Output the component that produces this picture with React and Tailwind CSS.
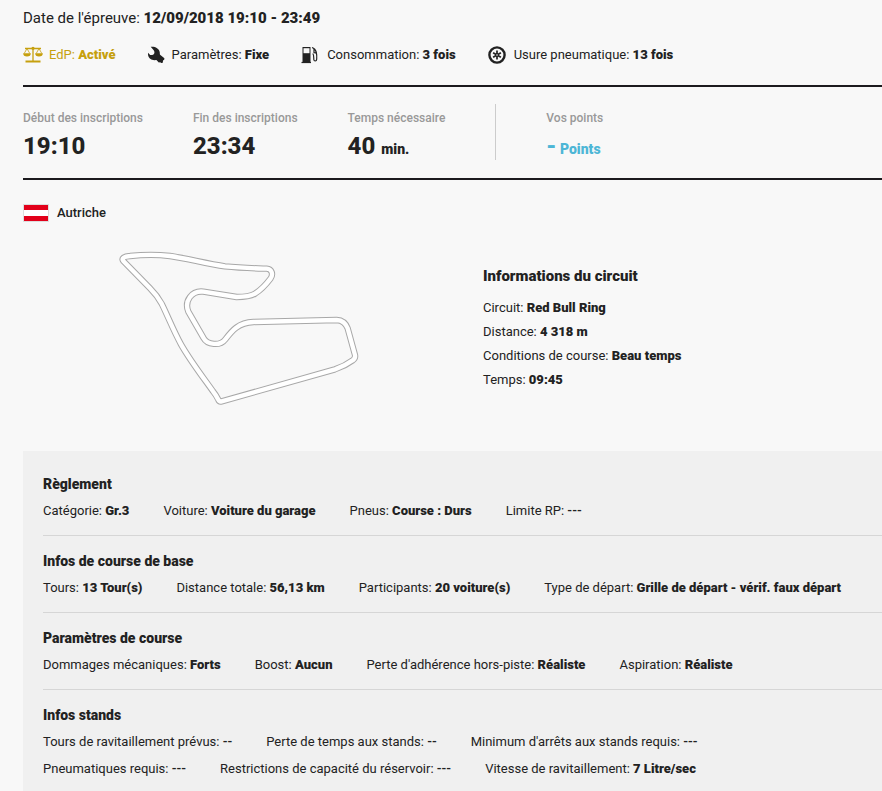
import React from 'react';

const sections = [
  {
    title: 'Règlement',
    items: [
      ['Catégorie', 'Gr.3'],
      ['Voiture', 'Voiture du garage'],
      ['Pneus', 'Course : Durs'],
      ['Limite RP', '---'],
    ],
  },
  {
    title: 'Infos de course de base',
    items: [
      ['Tours', '13 Tour(s)'],
      ['Distance totale', '56,13 km'],
      ['Participants', '20 voiture(s)'],
      ['Type de départ', 'Grille de départ - vérif. faux départ'],
    ],
  },
  {
    title: 'Paramètres de course',
    items: [
      ['Dommages mécaniques', 'Forts'],
      ['Boost', 'Aucun'],
      ["Perte d'adhérence hors-piste", 'Réaliste'],
      ['Aspiration', 'Réaliste'],
    ],
  },
  {
    title: 'Infos stands',
    items: [
      ['Tours de ravitaillement prévus', '--'],
      ['Perte de temps aux stands', '--'],
      ["Minimum d'arrêts aux stands requis", '---'],
      ['Pneumatiques requis', '---'],
      ['Restrictions de capacité du réservoir', '---'],
      ['Vitesse de ravitaillement', '7 Litre/sec'],
    ],
  },
];

const circuit = [
  ['Circuit', 'Red Bull Ring'],
  ['Distance', '4 318 m'],
  ['Conditions de course', 'Beau temps'],
  ['Temps', '09:45'],
];

const ScaleIcon = () => (
  <svg width="20" height="18" viewBox="1 0 20 18" fill="none" stroke="currentColor" aria-hidden="true">
    <path d="M3 2.500h16M11 1v14" strokeWidth="1.300" />
    <path d="M3.500 15.500h15" strokeWidth="2" />
    <path d="M5 2.500 2.200 7.500M5 2.500l2.800 5M17 2.500l-2.800 5M17 2.500l2.800 5" strokeWidth="0.800" />
    <path d="M1.200 7.200h7.600a3.800 3.200 0 0 1-7.600 0zM13.200 7.200h7.600a3.800 3.200 0 0 1-7.600 0z" fill="currentColor" stroke="none" />
    <circle cx="11" cy="2.300" r="1.600" fill="currentColor" stroke="none" />
  </svg>
);

const WrenchIcon = () => (
  <svg width="18" height="18" viewBox="1 0 18 18" fill="currentColor" aria-hidden="true">
    <path d="M3.700.8C8 .3 12 2.300 12.700 6c.2 1.200 0 2 .4 2.700l4.300 3.600-.2 1.500-1.200.7-.2 2.200-1.600.3-1-.7-1.400.1-2.400-2.300c-1.400.1-3.400.2-5.100-.7C1.500 12 .8 9.700 1 6.800l2.200 2.100c1.500.5 3.300 0 4-1.500.5-1.200.1-2.400-.5-3.200z" />
  </svg>
);

const FuelIcon = () => (
  <svg width="18" height="18" viewBox="0 0 18 18" fill="none" stroke="currentColor" aria-hidden="true">
    <path d="M1.500 1h8v16h-8z" fill="currentColor" stroke="none" />
    <path d="M2.500 2.200H8.500v5h-6z" fill="#f8f8f8" stroke="none" />
    <path d="M.5 16.500h9.500" strokeWidth="1.200" />
    <path d="M11 1.500c2 .5 3.600 2 4.200 4.500.5 2 .7 5 .5 7.300-.2 2.200-2.700 2.200-2.900.2-.1-2.500.2-4.500-1-6M13 3v3.500l2.400.7" strokeWidth="1.200" />
  </svg>
);

const TyreIcon = () => (
  <svg width="18" height="18" viewBox="0 0 18 18" fill="none" stroke="currentColor" aria-hidden="true">
    <circle cx="9" cy="9" r="7.600" strokeWidth="2.400" />
    <path d="M9 4.500v9M5.100 6.800l7.800 4.500M5.100 11.300l7.800-4.500" strokeWidth="1.700" />
    <circle cx="9" cy="9" r="1.700" fill="currentColor" stroke="none" />
    <circle cx="9" cy="9" r=".8" fill="#f8f8f8" stroke="none" />
  </svg>
);

const trackPath =
  'M40 60C34 52 42 46 60 45C100 41 145 41 180 45C225 51 290 68 345 76C395 81 440 82 470 83C486 84 490 100 482 112C470 128 455 145 435 158C418 168 400 168 380 168L280 152C245 148 222 180 235 212L280 290C292 312 330 316 346 295C366 269 385 245 430 243L680 237C698 238 708 248 713 262L735 342Q737 352 728 358Q705 375 675 385L335 481Q328 483 325 476Q318 462 309 451C280 410 240 358 213 310C190 268 172 222 155 188C145 170 133 155 120 142Z';

const TrackMap = () => (
  <svg className="block" width="260" height="170" viewBox="0 0 780 510" fill="none" strokeLinejoin="round" role="img" aria-label="Red Bull Ring">
    <path d={trackPath} stroke="#a8a8a8" strokeWidth="19" />
    <path d={trackPath} stroke="#ffffff" strokeWidth="13" />
  </svg>
);

// Values that are not set are shown as dashes, in a lighter weight
const Entry = ({ label, value }) => (
  <span className="whitespace-nowrap">
    {label}: <strong className={value.startsWith('--') ? 'font-semibold' : 'font-black'}>{value}</strong>
  </span>
);

const Stat = ({ label, children }) => (
  <div className="pt-1">
    <div className="text-xs leading-5 font-medium text-[#999999]">{label}</div>
    <div className="mt-1 h-7 text-2xl leading-7 font-extrabold">{children}</div>
  </div>
);

const App = () => {
  return (
    <main className="min-h-screen bg-[#f8f8f8] pl-[23px] font-['Roboto',sans-serif] text-[13px] leading-6 text-[#222222]">
      {/* Event date and settings */}
      <header className="border-b-2 border-[#1c1a1e] pt-2 pb-[18px]">
        <p className="text-[15px] leading-5">
          Date de l'épreuve: <strong className="font-black">12/09/2018 19:10 - 23:49</strong>
        </p>
        <div className="mt-[15px] flex flex-wrap gap-x-8">
          <div className="flex items-center gap-[6px] text-[#c6a00e]">
            <ScaleIcon />
            <Entry label="EdP" value="Activé" />
          </div>
          <div className="flex items-center gap-[6px]">
            <WrenchIcon />
            <Entry label="Paramètres" value="Fixe" />
          </div>
          <div className="flex items-center gap-2">
            <FuelIcon />
            <Entry label="Consommation" value="3 fois" />
          </div>
          <div className="flex items-center gap-2">
            <TyreIcon />
            <Entry label="Usure pneumatique" value="13 fois" />
          </div>
        </div>
      </header>

      {/* Entry times */}
      <div className="flex gap-[50px] border-b-2 border-[#1c1a1e] pt-[17px] pb-[18px]">
        <Stat label="Début des inscriptions">19:10</Stat>
        <Stat label="Fin des inscriptions">23:34</Stat>
        <Stat label="Temps nécessaire">
          40 <span className="text-sm font-black">min.</span>
        </Stat>
        <div className="w-px bg-[#cccccc]" />
        <Stat label="Vos points">
          <span className="text-[#4db6d6]">
            -<span className="text-sm font-black"> Points</span>
          </span>
        </Stat>
      </div>

      {/* Circuit */}
      <div className="flex items-center gap-2 pt-[21px]">
        <svg width="26" height="18" viewBox="0 0 26 18" aria-hidden="true">
          <path d="M0 0h26v18H0z" fill="#dddddd" />
          <path d="M1 1h24v16H1z" fill="#ffffff" />
          <path d="M1 1h24v5H1zM1 12h24v5H1z" fill="#e2001a" />
        </svg>
        <span className="font-medium">Autriche</span>
      </div>
      <div className="grid grid-cols-[434px_1fr] gap-x-[26px] pt-4 pb-10">
        <div className="flex justify-center">
          <TrackMap />
        </div>
        <div className="pt-[23px]">
          <h2 className="pb-2 text-[15px] leading-6 font-black">Informations du circuit</h2>
          {circuit.map(([label, value]) => (
            <p key={label}>
              <Entry label={label} value={value} />
            </p>
          ))}
        </div>
      </div>

      {/* Race rules */}
      <div className="bg-[#f0f0f0] pl-5">
        {sections.map((section) => (
          <section key={section.title} className="border-b border-[#d6d6d6] pt-3 pb-[11px] first:pt-5 last:border-b-0">
            <h3 className="text-sm leading-[26px] font-black">{section.title}</h3>
            <div className="flex max-w-[820px] flex-wrap gap-x-[34px] leading-[27px]">
              {section.items.map(([label, value]) => (
                <Entry key={label} label={label} value={value} />
              ))}
            </div>
          </section>
        ))}
      </div>
    </main>
  );
};

export default App;
